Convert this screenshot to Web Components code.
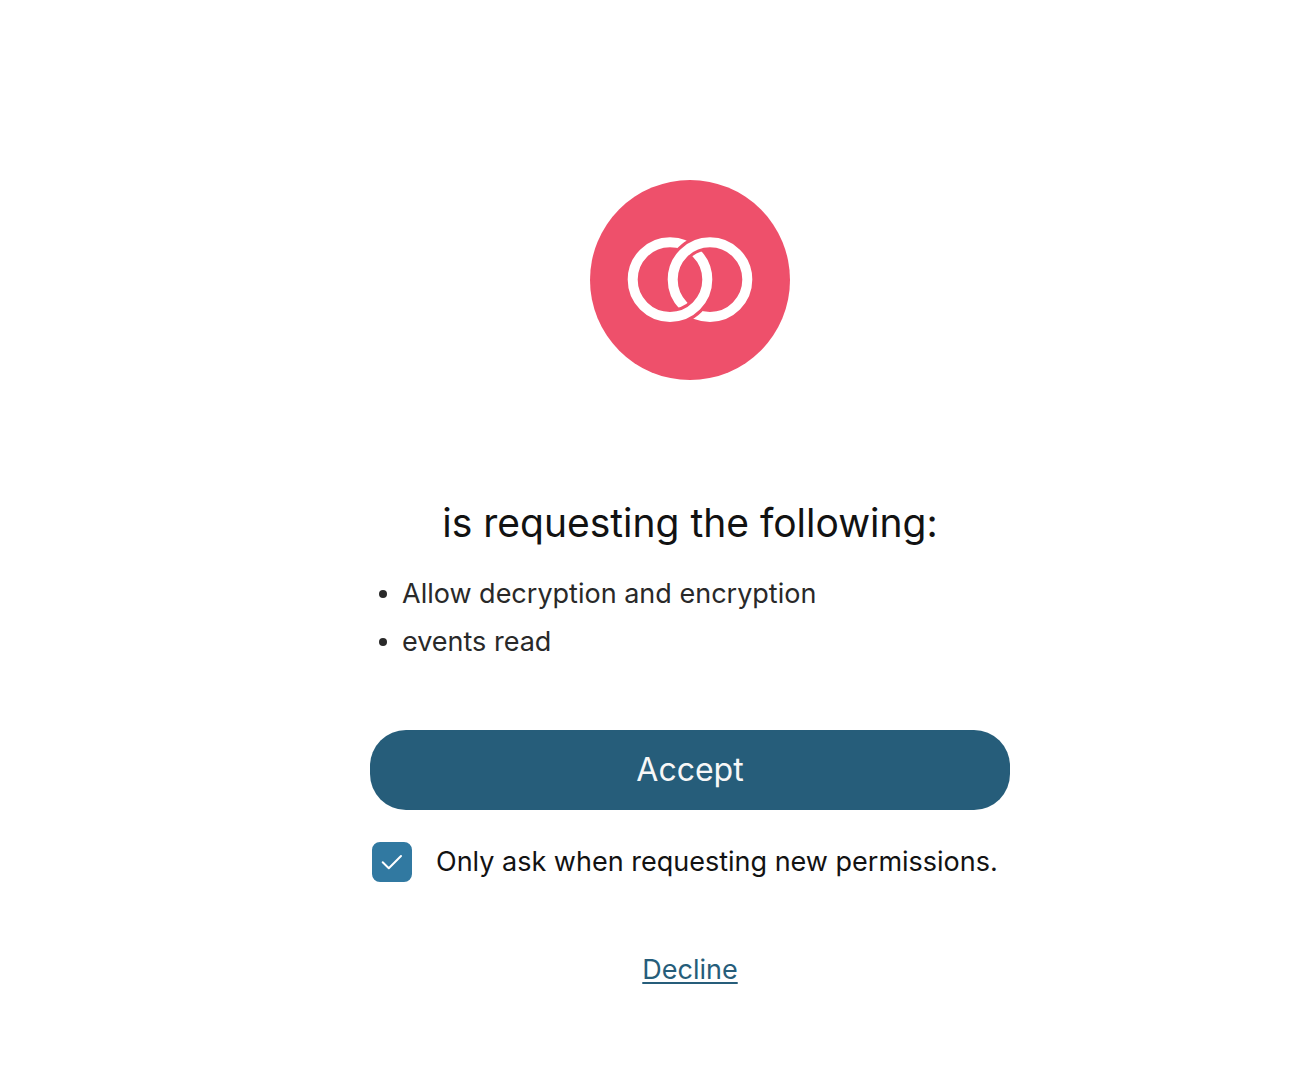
<!DOCTYPE html>
<html lang="en">
<head>
<meta charset="utf-8">
<meta name="viewport" content="width=device-width, initial-scale=1">
<title>Permissions</title>
<style>
  :root {
    --color-text: #121212;
    --color-text-soft: #292929;
    --color-primary: #265d7a;
    --color-check: #3179a1;
    --color-brand: #ee506b;
    --font-family: Inter, "Liberation Sans", sans-serif;
    --font-size-title: 39px;
    --font-size-button: 32px;
    --font-size-body: 27px;
  }
  body {
    margin: 0;
    background: #fff;
    color: var(--color-text);
    font-family: var(--font-family);
    font-size: var(--font-size-body);
  }
</style>
</head>
<body>
<consent-page>
  <app-logo slot="logo"></app-logo>
  <span slot="title">is requesting the following:</span>
  <scope-list scopes="Allow decryption and encryption|events read"></scope-list>
  <pill-button>Accept</pill-button>
  <check-field checked>Only ask when requesting new permissions.</check-field>
  <text-link slot="footer" href="#decline">Decline</text-link>
</consent-page>

<script>
class ConsentPage extends HTMLElement {
  constructor() {
    super();
    this.attachShadow({ mode: "open" });
  }
  connectedCallback() {
    this.shadowRoot.innerHTML = `
    <style>
      :host {
        display: block;
        padding: 180px 0 80px 74px;
      }
      main {
        display: flex;
        flex-direction: column;
        align-items: center;
        max-width: 640px;
        margin: 0 auto;
      }
      h1 {
        margin: 115px 0 19px;
        font-size: var(--font-size-title);
        font-weight: 400;
        line-height: 56px;
        text-align: center;
      }
      .content {
        align-self: stretch;
      }
      footer {
        margin-top: 64px;
      }
    </style>
    <main>
      <slot name="logo"></slot>
      <h1><slot name="title"></slot></h1>
      <div class="content"><slot></slot></div>
      <footer><slot name="footer"></slot></footer>
    </main>
    `;
  }
}

class AppLogo extends HTMLElement {
  constructor() {
    super();
    this.attachShadow({ mode: "open" });
  }
  connectedCallback() {
    // Each ring passes over the other once, the masks cut the gaps.
    this.shadowRoot.innerHTML = `
    <style>
      :host {
        display: block;
        width: 200px;
        height: 200px;
      }
      svg {
        display: block;
        width: 100%;
        height: 100%;
      }
    </style>
    <svg viewBox="0 0 200 200" fill="none" aria-hidden="true">
      <defs>
        <clipPath id="top"><rect width="200" height="100"/></clipPath>
        <clipPath id="bottom"><rect y="100" width="200" height="100"/></clipPath>
        <mask id="under-right" maskUnits="userSpaceOnUse" x="0" y="0" width="200" height="200">
          <rect width="200" height="200" fill="#fff"/>
          <circle cx="120" cy="99.6" r="37.3" stroke="#000" stroke-width="16" clip-path="url(#top)"/>
        </mask>
        <mask id="under-left" maskUnits="userSpaceOnUse" x="0" y="0" width="200" height="200">
          <rect width="200" height="200" fill="#fff"/>
          <circle cx="80" cy="99.6" r="37.3" stroke="#000" stroke-width="16" clip-path="url(#bottom)"/>
        </mask>
      </defs>
      <circle cx="100" cy="100" r="100" fill="var(--color-brand)"/>
      <g stroke="#fff" stroke-width="10">
        <g mask="url(#under-right)"><circle cx="80" cy="99.6" r="37.3"/></g>
        <g mask="url(#under-left)"><circle cx="120" cy="99.6" r="37.3"/></g>
      </g>
    </svg>
    `;
  }
}

class ScopeList extends HTMLElement {
  static get observedAttributes() {
    return ["scopes"];
  }
  constructor() {
    super();
    this.attachShadow({ mode: "open" });
  }
  render() {
    const scopes = (this.getAttribute("scopes") || "").split("|");

    this.shadowRoot.innerHTML = `
    <style>
      :host {
        display: block;
        margin-bottom: 64px;
        color: var(--color-text-soft);
      }
      ul {
        margin: 0;
        padding: 0 0 0 9px;
        list-style: none;
      }
      li {
        display: flex;
        align-items: center;
        gap: 15px;
        line-height: 48px;
      }
      li::before {
        content: "";
        width: 8px;
        height: 8px;
        border-radius: 50%;
        background: currentColor;
      }
    </style>
    <ul>
      ${scopes.map((scope) => `<li>${scope}</li>`).join("")}
    </ul>
    `;
  }
  connectedCallback() {
    this.render();
  }
  attributeChangedCallback() {
    this.render();
  }
}

class PillButton extends HTMLElement {
  constructor() {
    super();
    this.attachShadow({ mode: "open" });
  }
  connectedCallback() {
    this.shadowRoot.innerHTML = `
    <style>
      :host {
        display: block;
        margin-bottom: 32px;
      }
      button {
        display: block;
        width: 100%;
        padding: 16px 32px;
        border: 0;
        border-radius: 36px;
        background: var(--color-primary);
        color: #f7f7f7;
        font: inherit;
        font-size: var(--font-size-button);
        line-height: 48px;
        cursor: pointer;
      }
    </style>
    <button type="button"><slot></slot></button>
    `;
  }
}

class CheckField extends HTMLElement {
  constructor() {
    super();
    this.attachShadow({ mode: "open" });
  }
  connectedCallback() {
    this.shadowRoot.innerHTML = `
    <style>
      :host {
        display: block;
        padding: 0 2px;
      }
      label {
        display: flex;
        align-items: center;
        gap: 24px;
        line-height: 40px;
        cursor: pointer;
      }
      .box {
        display: grid;
        flex: none;
      }
      input, svg {
        grid-area: 1 / 1;
        width: 40px;
        height: 40px;
      }
      input {
        appearance: none;
        box-sizing: border-box;
        margin: 0;
        border: 2px solid var(--color-check);
        border-radius: 8px;
      }
      input:checked {
        background: var(--color-check);
      }
      svg {
        pointer-events: none;
      }
      input:not(:checked) + svg {
        visibility: hidden;
      }
    </style>
    <label>
      <span class="box">
        <input type="checkbox" ${this.hasAttribute("checked") ? "checked" : ""}>
        <svg viewBox="0 0 40 40" fill="none" stroke="#fff" stroke-width="2" stroke-linecap="round" stroke-linejoin="round" aria-hidden="true">
          <path d="M10.7 20.2L16.8 26.2L29 14"/>
        </svg>
      </span>
      <span><slot></slot></span>
    </label>
    `;
  }
}

class TextLink extends HTMLElement {
  constructor() {
    super();
    this.attachShadow({ mode: "open" });
  }
  connectedCallback() {
    this.shadowRoot.innerHTML = `
    <style>
      :host {
        display: block;
        line-height: 48px;
      }
      a {
        color: var(--color-primary);
        text-decoration-thickness: 2px;
        text-underline-offset: 3px;
      }
    </style>
    <a href="${this.getAttribute("href")}"><slot></slot></a>
    `;
  }
}

customElements.define("consent-page", ConsentPage);
customElements.define("app-logo", AppLogo);
customElements.define("scope-list", ScopeList);
customElements.define("pill-button", PillButton);
customElements.define("check-field", CheckField);
customElements.define("text-link", TextLink);
</script>
</body>
</html>
